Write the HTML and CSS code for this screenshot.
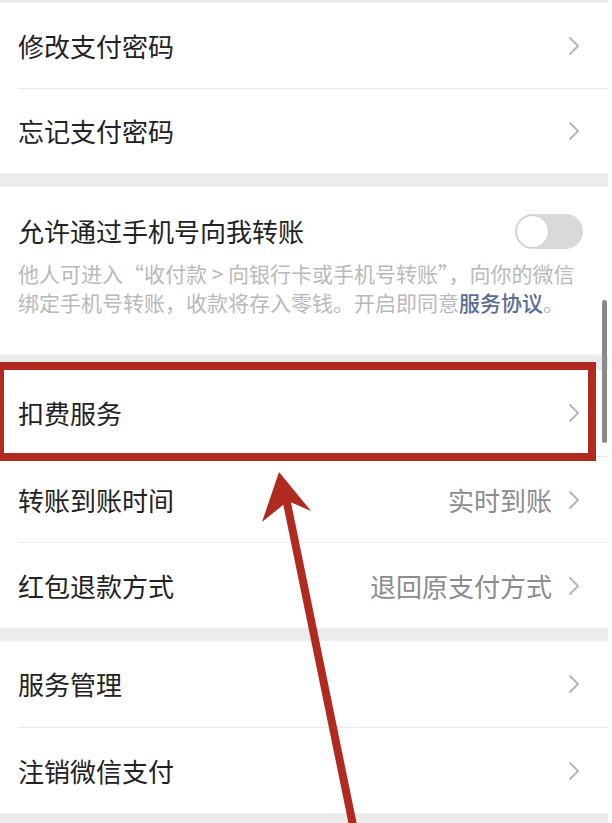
FILE: index.html
```html
<!DOCTYPE html>
<html lang="zh-CN">
<head>
<meta charset="utf-8">
<title>支付设置</title>
<link rel="stylesheet" href="styles.css">
</head>
<body>
<div class="page">
  <div class="band band-top"></div>
  <section class="group">
    <div class="row">
      <span class="label">修改支付密码</span>
      <svg class="chev" viewBox="0 0 12 20" width="12" height="20"><path d="M2 2 L10 10 L2 18" /></svg>
    </div>
    <div class="row">
      <span class="label">忘记支付密码</span>
      <svg class="chev" viewBox="0 0 12 20" width="12" height="20"><path d="M2 2 L10 10 L2 18" /></svg>
    </div>
  </section>
  <div class="band"></div>
  <section class="group toggle-group">
    <div class="toggle-row">
      <span class="label">允许通过手机号向我转账</span>
      <span class="switch"><span class="knob"></span></span>
    </div>
    <p class="desc">他人可进入“收付款 &gt; 向银行卡或手机号转账”，向你的微信<br>绑定手机号转账，收款将存入零钱。开启即同意<span class="link">服务协议</span>。</p>
  </section>
  <div class="band band-b"></div>
  <section class="group">
    <div class="row tall">
      <span class="label">扣费服务</span>
      <svg class="chev" viewBox="0 0 12 20" width="12" height="20"><path d="M2 2 L10 10 L2 18" /></svg>
    </div>
    <div class="row tall">
      <span class="label">转账到账时间</span>
      <span class="value">实时到账</span>
      <svg class="chev" viewBox="0 0 12 20" width="12" height="20"><path d="M2 2 L10 10 L2 18" /></svg>
    </div>
    <div class="row tall">
      <span class="label">红包退款方式</span>
      <span class="value">退回原支付方式</span>
      <svg class="chev" viewBox="0 0 12 20" width="12" height="20"><path d="M2 2 L10 10 L2 18" /></svg>
    </div>
  </section>
  <div class="band band-c"></div>
  <section class="group">
    <div class="row tall">
      <span class="label">服务管理</span>
      <svg class="chev" viewBox="0 0 12 20" width="12" height="20"><path d="M2 2 L10 10 L2 18" /></svg>
    </div>
    <div class="row tall">
      <span class="label">注销微信支付</span>
      <svg class="chev" viewBox="0 0 12 20" width="12" height="20"><path d="M2 2 L10 10 L2 18" /></svg>
    </div>
  </section>
  <div class="band band-end"></div>

  <div class="highlight-box"></div>
  <svg class="arrow" viewBox="0 0 612 823" width="612" height="823">
    <line x1="286" y1="498" x2="356" y2="840" />
    <polygon points="279,472 311,511 288,501 262,522" />
  </svg>
  <div class="scrollbar"></div>
</div>
</body>
</html>
```

FILE: styles.css
```css
html, body {
  margin: 0;
  padding: 0;
  background: #ffffff;
}

body {
  font-family: "Noto Sans CJK SC", "Noto Sans", sans-serif;
  color: #222222;
  overflow: hidden;
}

.page {
  position: relative;
  width: 608px;
  height: 823px;
  overflow: hidden;
  background: #ffffff;
}

.band {
  height: 14px;
  background: #ececec;
}

.band-top {
  height: 3px;
}

.band-b {
  height: 15px;
}

.band-c {
  height: 13px;
}

.band-end {
  height: 20px;
}

.group {
  background: #ffffff;
}

.row {
  box-sizing: border-box;
  height: 85px;
  margin-left: 18px;
  padding-right: 28px;
  display: flex;
  align-items: center;
}

.row.tall {
  height: 86px;
}

.row + .row {
  border-top: 1px solid #eaeaea;
}

.label {
  flex: 1;
  font-size: 26px;
  line-height: 36px;
  color: #222222;
  letter-spacing: 0;
}

.value {
  font-size: 26px;
  line-height: 36px;
  color: #8c8c8c;
  margin-right: 16px;
}

.chev {
  display: block;
  flex: none;
}

.chev path {
  fill: none;
  stroke: #b6b6b6;
  stroke-width: 2;
  stroke-linecap: round;
  stroke-linejoin: round;
}

.toggle-group {
  box-sizing: border-box;
  height: 168px;
  padding: 26px 25px 0 18px;
}

.toggle-row {
  display: flex;
  align-items: center;
  height: 36px;
}

.switch {
  position: relative;
  flex: none;
  width: 68px;
  height: 35px;
  border-radius: 18px;
  background: #d9d9d9;
}

.knob {
  position: absolute;
  left: 2px;
  top: 2px;
  width: 31px;
  height: 31px;
  border-radius: 50%;
  background: #ffffff;
  box-shadow: 0 0 0 1px #cfcfcf;
}

.desc {
  margin: 10px 0 0 0;
  font-size: 21px;
  line-height: 29px;
  color: #b9b9b9;
  white-space: nowrap;
}

.link {
  color: #5b6b93;
  font-weight: 500;
}

.highlight-box {
  position: absolute;
  left: -4px;
  top: 362px;
  width: 584px;
  height: 83px;
  border: 8px solid #b02a1f;
}

.arrow {
  position: absolute;
  left: 0;
  top: 0;
}

.arrow line {
  stroke: #b02a1f;
  stroke-width: 8;
}

.arrow polygon {
  fill: #b02a1f;
}

.scrollbar {
  position: absolute;
  left: 602px;
  top: 300px;
  width: 5px;
  height: 143px;
  border-radius: 3px;
  background: #8a8a8a;
}
```
